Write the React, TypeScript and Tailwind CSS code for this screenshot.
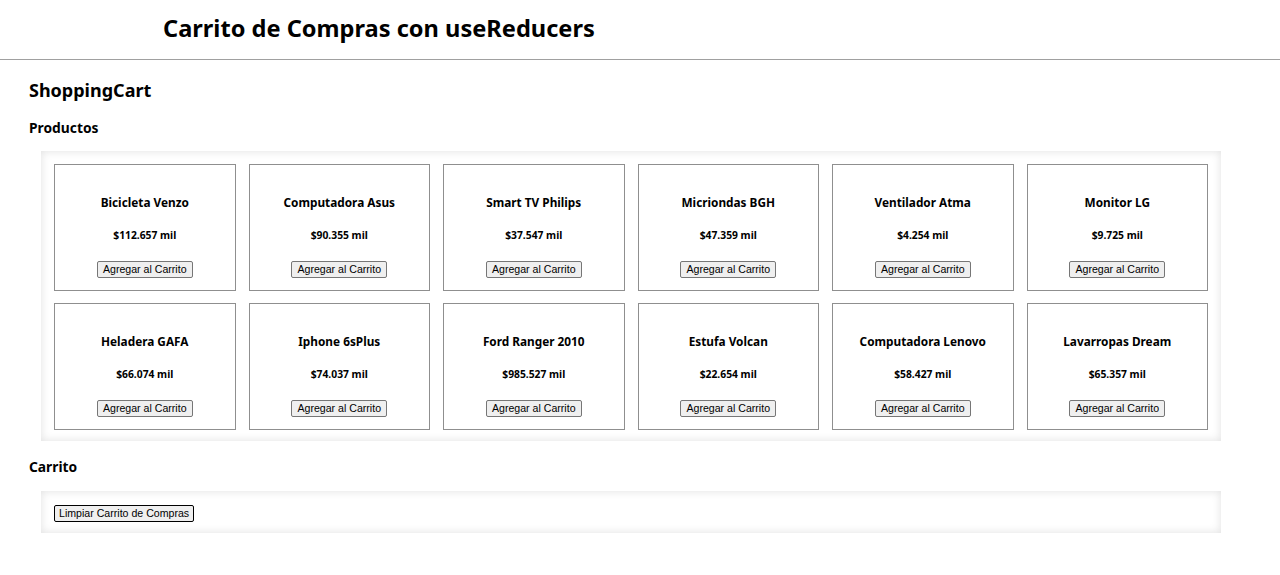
import React, { useReducer } from 'react';

interface Product {
  id: number;
  name: string;
  price: string;
}

const products: Product[] = [
  { id: 1, name: 'Bicicleta Venzo', price: '$112.657 mil' },
  { id: 2, name: 'Computadora Asus', price: '$90.355 mil' },
  { id: 3, name: 'Smart TV Philips', price: '$37.547 mil' },
  { id: 4, name: 'Micriondas BGH', price: '$47.359 mil' },
  { id: 5, name: 'Ventilador Atma', price: '$4.254 mil' },
  { id: 6, name: 'Monitor LG', price: '$9.725 mil' },
  { id: 7, name: 'Heladera GAFA', price: '$66.074 mil' },
  { id: 8, name: 'Iphone 6sPlus', price: '$74.037 mil' },
  { id: 9, name: 'Ford Ranger 2010', price: '$985.527 mil' },
  { id: 10, name: 'Estufa Volcan', price: '$22.654 mil' },
  { id: 11, name: 'Computadora Lenovo', price: '$58.427 mil' },
  { id: 12, name: 'Lavarropas Dream', price: '$65.357 mil' },
];

type Action = { type: 'ADD'; id: number } | { type: 'CLEAR' };

const cartReducer = (state: number[], action: Action) => {
  switch (action.type) {
    case 'ADD':
      return [...state, action.id];
    case 'CLEAR':
      return [];
    default:
      return state;
  }
};

const font = "font-['Noto_Sans','Open_Sans',sans-serif]";
const btnBase =
  "font-['Liberation_Sans',Arial,sans-serif] text-[10.6px] leading-[13px] py-[1px] bg-[#efefef] border rounded-[2px] text-black";

const ProductCard = ({ product, onAdd }: { product: Product; onAdd: () => void }) => (
  <div className="h-[127px] border border-[#8f8f8f] bg-white flex flex-col items-center">
    <h3 className="mt-[29px] text-[11.8px] leading-[16px] font-bold">{product.name}</h3>
    <h5 className="mt-[18px] text-[10.3px] leading-[14px] font-bold">{product.price}</h5>
    <button onClick={onAdd} className={`mt-[19px] px-[5px] border-[#767676] ${btnBase}`}>
      Agregar al Carrito
    </button>
  </div>
);

export default function App() {
  const [cart, dispatch] = useReducer(cartReducer, []);

  return (
    <div className={`${font} bg-white text-black min-h-[575px]`}>
      <header className="h-[60px] border-b border-[#a0a0a0]">
        <h1 className="pt-[12px] pl-[163px] text-[23.6px] leading-[32px] font-bold">
          Carrito de Compras con useReducers
        </h1>
      </header>

      <div className="px-[29px]">
        <h2 className="mt-[18px] text-[18px] leading-[24px] font-bold">ShoppingCart</h2>
        <h3 className="mt-[16px] text-[13.8px] leading-[20px] font-bold">Productos</h3>

        <div className="mt-[13px] ml-[12px] w-[1180px] pt-[13px] pb-[11px] px-[13px] grid grid-cols-6 gap-x-[13px] gap-y-[12px] shadow-[inset_0_0_10px_rgba(0,0,0,0.12)]">
          {products.map((p) => (
            <ProductCard key={p.id} product={p} onAdd={() => dispatch({ type: 'ADD', id: p.id })} />
          ))}
        </div>

        <h3 className="mt-[16px] text-[13.8px] leading-[20px] font-bold">Carrito</h3>

        <div className="mt-[14px] ml-[12px] w-[1180px] pt-[14px] pb-[11px] px-[13px] flex flex-col items-start shadow-[inset_0_0_10px_rgba(0,0,0,0.12)]">
          <button
            onClick={() => dispatch({ type: 'CLEAR' })}
            className={`px-[4px] border-black ${btnBase}`}
          >
            Limpiar Carrito de Compras
          </button>
          {cart.map((id, i) => (
            <div key={i} className="text-[12px]">
              {products.find((p) => p.id === id)?.name}
            </div>
          ))}
        </div>
      </div>
    </div>
  );
}
